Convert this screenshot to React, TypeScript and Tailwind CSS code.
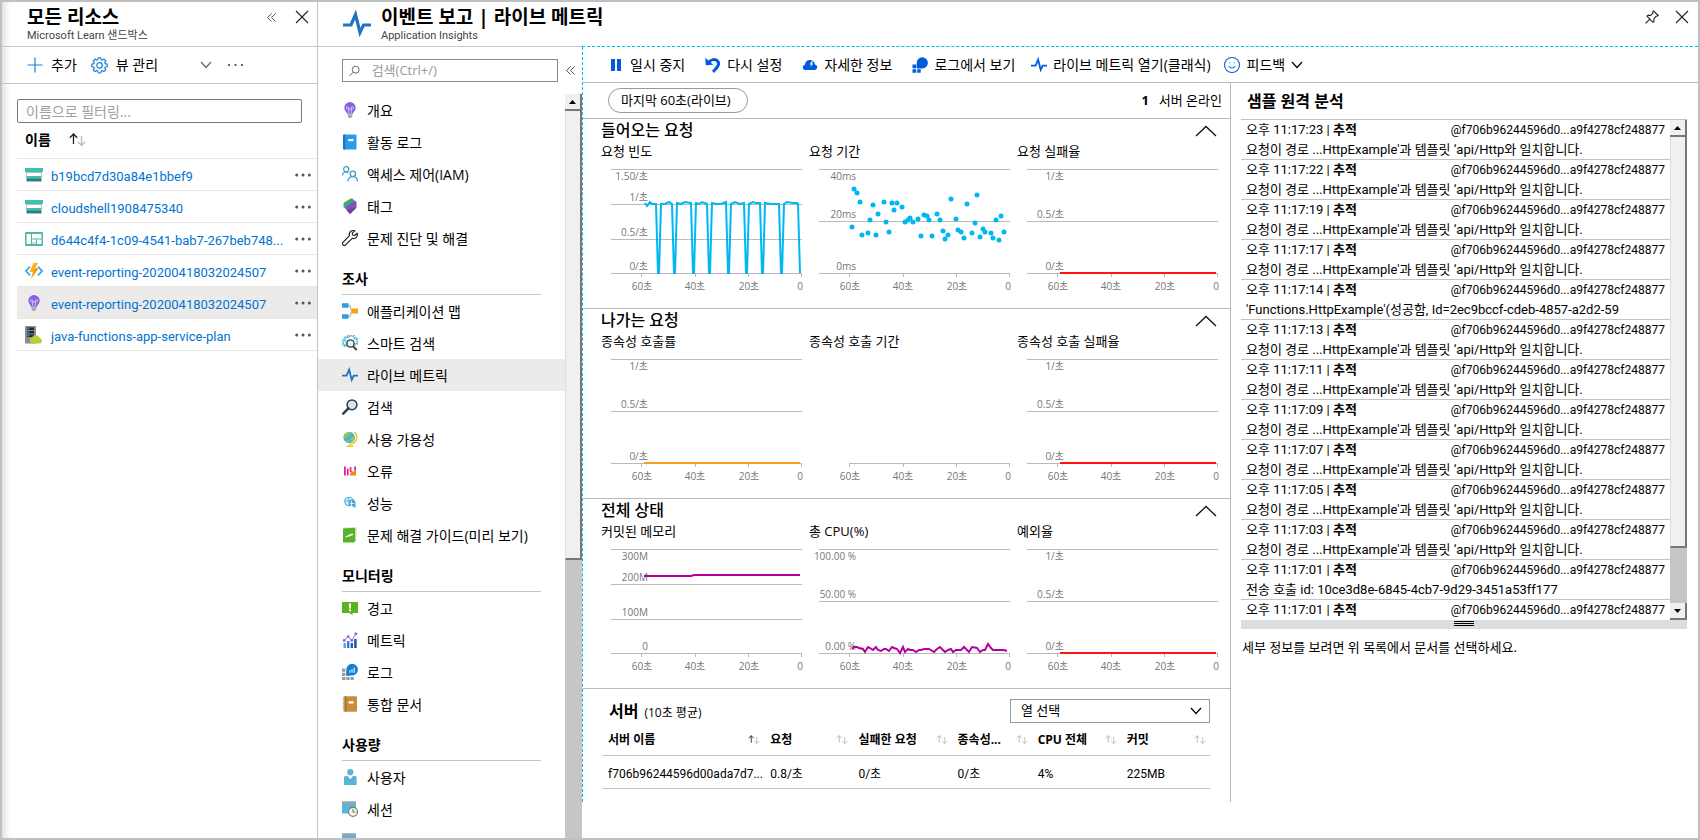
import React from "react";
import { Smile } from "lucide-react";

type IconProps = { className?: string };

// ---------- small line icons ----------

const CloseIcon = () => (
  <svg width="14" height="14" viewBox="0 0 14 14" fill="none" stroke="#222" strokeWidth="1.1">
    <path d="M1 1l12 12M13 1L1 13" />
  </svg>
);

const DoubleLeft = () => (
  <svg width="9" height="9" viewBox="0 0 9 9" fill="none" stroke="#555" strokeWidth="1">
    <path d="M4.500.5l-4 4 4 4M8.500.5l-4 4 4 4" />
  </svg>
);

const ChevronDown = ({ className = "" }: IconProps) => (
  <svg className={className} width="12" height="8" viewBox="0 0 12 8" fill="none" stroke="currentColor" strokeWidth="1.2">
    <path d="M1 1l5 5.500L11 1" />
  </svg>
);

const ChevronUpWide = () => (
  <svg width="22" height="12" viewBox="0 0 22 12" fill="none" stroke="#111" strokeWidth="1.300">
    <path d="M1 11l10-9.500L21 11" />
  </svg>
);

const PinIcon = () => (
  <svg width="14" height="14" viewBox="0 0 14 14" fill="none" stroke="#222" strokeWidth="1.1" strokeLinejoin="round">
    <path d="M8.500.8l4.700 4.700-1.300.8-.7-.1-2.300 2.500.1 2.700-1 .9L1.900 6.200l1-.9 2.700.1L8 3.200 7.800 2z" />
    <path d="M4.900 9.200L.6 13.400" />
  </svg>
);

const SortIcon = ({ active = false, large = false }: { active?: boolean; large?: boolean }) => (
  <svg className="shrink-0" width={large ? 17 : 12} height={large ? 13 : 9} viewBox="0 0 17 13" fill="none" strokeWidth="1.300">
    <path d="M4.500 11V1M.8 4.700L4.500 1l3.700 3.700" stroke={active ? "#222" : "#b5b5b5"} />
    <path d="M12.500 3v9.500M8.800 8.800l3.700 3.700 3.700-3.700" stroke="#bdbdbd" />
  </svg>
);

const Dots = ({ className = "" }: IconProps) => (
  <svg className={className} width="16" height="4" viewBox="0 0 16 4" fill="currentColor">
    <circle cx="1.700" cy="2" r="1.500" />
    <circle cx="8" cy="2" r="1.500" />
    <circle cx="14.300" cy="2" r="1.500" />
  </svg>
);

const Pulse = ({ className = "" }: IconProps) => (
  <svg className={className} viewBox="0 0 28 28" fill="none" stroke="currentColor" strokeWidth="3.200" strokeLinejoin="miter">
    <path d="M0 15h8L12.500 4.500l4.500 18 3.500-7.500h7.500" />
  </svg>
);

// ---------- resource icons ----------

const StorageIcon = () => (
  <svg width="18" height="16" viewBox="0 0 18 16">
    <path d="M1 4h16v10a1 1 0 0 1-1 1H2a1 1 0 0 1-1-1z" fill="#b8b8b8" />
    <path d="M0 1h18v4H0z" fill="#37c2b1" />
    <path d="M2 6h14v3H2z" fill="#fff" />
    <path d="M2 9h14v2.500H2z" fill="#37c2b1" />
    <path d="M2 11.500h14V14H2z" fill="#258277" />
  </svg>
);

const DashboardIcon = () => (
  <svg width="18" height="14" viewBox="0 0 18 14">
    <rect width="18" height="14" rx="1" fill="#4fb5a4" />
    <path d="M1.500 2h4.500v10H1.500zM7 2h9.500v4.500H7zM7 7.500h4V12H7zM12 7.500h4.500V12H12z" fill="#fff" />
    <path d="M7 9.500h4V12H7z" fill="#bfe8e1" />
  </svg>
);

const FunctionIcon = () => (
  <svg width="18" height="16" viewBox="0 0 18 16">
    <path d="M5 3.500L1 8l4 4.500M13 3.500L17 8l-4 4.500" fill="none" stroke="#32a9e8" strokeWidth="1.800" />
    <path d="M8.500 0H13l-3 5.500h3.500L5.800 16l2-7H4.600z" fill="#fbb01c" />
    <path d="M9 5.500h4.500L5.800 16l3.700-7.500z" fill="#f58b1b" />
  </svg>
);

const BulbIcon = () => (
  <svg className="h-4 w-4" viewBox="0 0 16 16">
    <path d="M8 0a5.700 5.700 0 0 0-5.700 5.700c0 2.700 2.200 3.800 2.900 6.100h5.600c.7-2.300 2.900-3.400 2.900-6.100A5.700 5.700 0 0 0 8 0z" fill="#8660e0" />
    <path d="M6.700 11V5.800a1.200 1.200 0 1 0-1.200 1.200h5a1.200 1.200 0 1 0-1.200-1.200V11" fill="none" stroke="#dccbff" strokeWidth=".9" />
    <path d="M5.500 12.300h5v1.600L9.300 16H6.700l-1.200-2.100z" fill="#a9a9a9" />
  </svg>
);

const PlanIcon = () => (
  <svg width="18" height="18" viewBox="0 0 18 18">
    <rect width="11" height="17.500" rx="1" fill="#8c8c8c" />
    <path d="M2 1.500h7V4H2zM2 5h7v2.500H2zM2 8.500h7V11H2z" fill="#1f2a35" />
    <path d="M2.500 2.200h1.800v1H2.500zM2.500 5.700h1.800v1H2.500zM2.500 9.200h1.800v1H2.500z" fill="#5fb8e8" />
    <path d="M7.500 17.500a3.200 3.200 0 0 1-.3-6.300 4.200 4.200 0 0 1 7.700 1.100 2.700 2.700 0 0 1 .3 5.200z" fill="#b2d233" />
  </svg>
);

const GearIcon = () => (
  <svg width="17" height="17" viewBox="0 0 17 17" fill="none" stroke="#1a80d9" strokeWidth="1.200" strokeLinejoin="round">
    <path d="M7.200.8h2.600l.4 2 1 .4 1.700-1.100 1.900 1.900-1.100 1.600.5 1.100 2 .4v2.500l-2 .4-.5 1.100 1.100 1.700-1.900 1.900-1.700-1.200-1 .5-.4 2H7.200l-.4-2-1.100-.5-1.600 1.200-1.900-1.900 1.100-1.700-.4-1.100-2.100-.4V7.100l2.100-.4.4-1.100-1.100-1.600 1.900-1.900 1.600 1.100 1.100-.4z" />
    <circle cx="8.500" cy="8.400" r="2.700" />
  </svg>
);

// ---------- navigation icons ----------

const BookBlue = () => (
  <svg className="h-4 w-4" viewBox="0 0 16 16">
    <rect x="1" y=".5" width="13.500" height="15" rx="1" fill="#2c9be6" />
    <path d="M1 1.500a1 1 0 0 1 1-1h1.200v15H2a1 1 0 0 1-1-1z" fill="#1577c2" />
    <path d="M6.300 5h5.200v2.200H6.300z" fill="#fff" />
  </svg>
);

const AccessIcon = () => (
  <svg className="h-4 w-4" viewBox="0 0 16 16" fill="none" stroke="#36a0c8" strokeWidth="1.200">
    <circle cx="4.200" cy="3.300" r="2.600" />
    <path d="M.4 9.700c.3-2.300 1.700-3.700 3.500-3.700 1 0 1.800.4 2.400 1" />
    <circle cx="10.800" cy="7.800" r="2.700" />
    <path d="M5.800 15.500c.3-2.900 2.200-4.900 5-4.900s4.500 2 4.800 4.900" />
  </svg>
);

const TagIcon = () => (
  <svg className="h-4 w-4" viewBox="0 0 16 16">
    <path d="M1.500 5L8.500.4l3.200.3L3.500 10.500 1.500 9.300z" fill="#5ea42c" />
    <path d="M2.800 6.500L11 1.500l2 1.300-7.500 9.400-2.700-2z" fill="#2f9fc4" />
    <path d="M4.500 8.300L13 2.600l1.500 1.500v5.500L8 16l-3.500-4z" fill="#8552a8" />
    <path d="M14.500 9.600L8 16l-3.500-4z" fill="#6d3f92" />
  </svg>
);

const WrenchIcon = () => (
  <svg className="h-4 w-4" viewBox="0 0 16 16" fill="none" stroke="#222" strokeWidth="1.200" strokeLinejoin="round">
    <path d="M12.800.9a3.900 3.900 0 0 0-5.300 4.800L1 12.300a1.800 1.800 0 0 0 2.600 2.600l6.600-6.600A3.900 3.900 0 0 0 15.100 3.200l-2.500 2.300-2-.5-.4-1.900z" />
  </svg>
);

const AppMapIcon = () => (
  <svg className="h-4 w-4" viewBox="0 0 16 16">
    <path d="M5 2.500h2.200c2.500 0 .5 5.200 3.300 5.500-2.800.3-.8 5.500-3.300 5.500H5" fill="none" stroke="#b8b8b8" strokeWidth="1.300" />
    <path d="M0 .2h6.500v4.600H0zM0 11.200h6.500v4.600H0z" fill="#2f9fdf" />
    <path d="M9.500 5.500H16v5H9.500z" fill="#f9a11b" />
  </svg>
);

const SmartSearchIcon = () => (
  <svg className="h-4 w-4" viewBox="0 0 16 16">
    <path d="M3.200 10.700A3 3 0 0 1 2 5.200 3.500 3.500 0 0 1 6 2a4 4 0 0 1 7 1.300 3.300 3.300 0 0 1 1 6z" fill="none" stroke="#4db4dc" strokeWidth="2.600" strokeDasharray="1.500 .7" />
    <path d="M3 5h9v6H4z" fill="#8ad0ea" />
    <circle cx="8.500" cy="8.500" r="3.600" fill="#e3f4fb" stroke="#3b3b3b" strokeWidth="1.300" />
    <path d="M11.200 11.400l3.500 3.600" stroke="#3b3b3b" strokeWidth="1.900" />
  </svg>
);

const SearchDark = () => (
  <svg className="h-4 w-4" viewBox="0 0 16 16">
    <circle cx="10" cy="5.800" r="4.900" fill="#cfe7f8" stroke="#3d3d3d" strokeWidth="1.500" />
    <path d="M6.400 9.400l-5.200 5.200" stroke="#3d3d3d" strokeWidth="2.500" strokeLinecap="round" />
  </svg>
);

const GlobeIcon = () => (
  <svg className="h-4 w-4" viewBox="0 0 16 16">
    <circle cx="7.200" cy="6.500" r="5.800" fill="#4cb2dd" />
    <path d="M3 3.500c2-2.500 4-2.500 5.500-2l-1 3-2.500 1-1 2-2-.5zM8.500 6.500l3.300-1 1 2-2.300 3.500-2-1.500zM4.500 9l2 .5.500 2.300-2-.5z" fill="#9bc93c" />
    <path d="M12.500.8a7.300 7.300 0 0 1-4 12.500M8 13v2M4.500 15.300h7" fill="none" stroke="#f2c230" strokeWidth="1.400" />
  </svg>
);

const FailuresIcon = () => (
  <svg className="h-4 w-4" viewBox="0 0 16 16">
    <path d="M2 3.500h1.800v9H2zM5 5.500h1.600v7H5zM12.200 3.500H14v4h-1.800zM7.800 4h1.600v5H7.800z" fill="#e3209b" />
    <path d="M7.500 12.500l1.800-5 2 1.500 2.700-2.500v6z" fill="#f58220" />
  </svg>
);

const PerformanceIcon = () => (
  <svg className="h-4 w-4" viewBox="0 0 16 16">
    <circle cx="7" cy="6.500" r="4.300" fill="#d9f0f8" stroke="#4db4dc" strokeWidth="1.100" />
    <path d="M3 6h7M6 2.500L8 9" stroke="#4db4dc" />
    <path d="M6.500 8a3.500 3.500 0 0 1 7 0v5l-2.500-1.500-4.500-1z" fill="#4aa9d0" />
    <path d="M9.500 6v6M8 8.500h4" stroke="#fff" strokeWidth=".8" />
  </svg>
);

const GuideIcon = () => (
  <svg className="h-4 w-4" viewBox="0 0 16 16">
    <path d="M2.500.5h12v14h-12z" fill="#c9e4ad" />
    <path d="M1 1.500l12-.7V14l-1 1.500H1z" fill="#59b02c" />
    <path d="M3.500 9.800h1.700l1.300-1.600 1 .9 1.300-1.900.8 1 1.500-1.400" fill="none" stroke="#fff" strokeWidth="1.100" />
  </svg>
);

const AlertIcon = () => (
  <svg className="h-4 w-4" viewBox="0 0 16 16">
    <path d="M0 2h16v11h-5.500v2.200L7.500 13H0z" fill="#5fb21f" />
    <path d="M7 3.500h2v5H7zM7 9.500h2v1.800H7z" fill="#fff" />
  </svg>
);

const MetricsIcon = () => (
  <svg className="h-4 w-4" viewBox="0 0 16 16">
    <path d="M1.500 11h2.400v5H1.500z" fill="#5ea0ef" />
    <path d="M5 9h2.400v7H5z" fill="#2f7be0" />
    <path d="M8.600 11H11v5H8.600z" fill="#1560bd" />
    <path d="M12.200 7h2.400v9h-2.400z" fill="#15508f" />
    <path d="M2.200 8.500l3.900-3.800 3.700 3.800 4-6.500" fill="none" stroke="#9b62e0" strokeWidth="1" />
    <circle cx="2.200" cy="8.500" r="1.400" fill="#9b62e0" />
    <circle cx="6.100" cy="4.700" r="1.400" fill="#9b62e0" />
    <circle cx="9.800" cy="8.500" r="1.400" fill="#9b62e0" />
    <circle cx="13.800" cy="1.700" r="1.500" fill="#9b62e0" />
  </svg>
);

const LogsIcon = () => (
  <svg className="h-4 w-4" viewBox="0 0 16 16">
    <path d="M0 4.500h3.400v3.200H0zM0 8.700h3.400v3.200H0zM0 12.900h3.400V16H0zM4.300 12.900h3.300V16H4.300zM8.500 12.900h3.300V16H8.500zM4.300 8.700h3.300v3.200H4.300z" fill="#9b9b9b" />
    <path d="M4.300 11.500V5.800a5.800 5.800 0 1 1 5.800 5.700z" fill="#0f7fd6" />
    <path d="M7.200 6.300h1.300v2.500H7.200zM9.400 5h1.300v3.800H9.400zM11.600 3.500h1.300v5.300h-1.300z" fill="#bfe3fa" />
  </svg>
);

const NotebookIcon = () => (
  <svg className="h-4 w-4" viewBox="0 0 16 16">
    <rect x="1.500" y=".3" width="13.500" height="15.500" rx=".8" fill="#c98d3f" />
    <path d="M3.300.3h1v15.500h-1z" fill="#a36b27" />
    <path d="M.5 2.500h2M.5 5h2M.5 7.500h2M.5 10h2M.5 12.500h2" stroke="#b9b9b9" />
    <path d="M6.500 5.300h5v2.200h-5z" fill="#fff" />
  </svg>
);

const UserIcon = () => (
  <svg className="h-4 w-4" viewBox="0 0 16 16">
    <circle cx="8.300" cy="3.200" r="3.100" fill="#59b4d9" />
    <path d="M2 16V8.500C2 7.600 2.700 7 3.500 7h2l2.800 3.300L11 7h2c.9 0 1.600.6 1.600 1.500V16z" fill="#59b4d9" />
  </svg>
);

const SessionIcon = () => (
  <svg className="h-4 w-4" viewBox="0 0 16 16">
    <path d="M0 .5h14v12H0z" fill="#59b4d9" />
    <path d="M0 .5h14v2.300H0z" fill="#a0a1a2" />
    <circle cx="11" cy="10.800" r="4.500" fill="#f5f5f5" stroke="#7a7a7a" strokeWidth="1.200" />
    <path d="M11 8v3h2.500" fill="none" stroke="#5c8f10" strokeWidth="1.100" />
  </svg>
);

// ---------- toolbar icons ----------

const PauseIcon = () => (
  <svg className="h-4 w-4" viewBox="0 0 16 16" fill="#015cda">
    <path d="M3 2h4v12H3zM9 2h4v12H9z" />
  </svg>
);

const ResetIcon = () => (
  <svg className="h-4 w-4" viewBox="0 0 16 16">
    <path d="M3.500 5.500c2.500-3.200 6.500-3.900 8.900-1.600 2.700 2.700.8 5.600-4.400 11" fill="none" stroke="#015cda" strokeWidth="3" />
    <path d="M.3.700l.5 7.500 7.500-.4z" fill="#015cda" />
  </svg>
);

const CloudIcon = () => (
  <svg className="h-4 w-4" viewBox="0 0 16 16">
    <path d="M2.800 13a2.700 2.700 0 0 1 .2-5.300A4.800 4.800 0 0 1 8 3a4.800 4.800 0 0 1 5 4.400A2.900 2.900 0 0 1 13.200 13z" fill="#015cda" />
    <path d="M9.800 4L7.800 7.500h1.600L8.300 10.300l3-3.700H9.800l1.200-2.300z" fill="#fff" />
  </svg>
);

const LogSolidIcon = () => (
  <svg className="h-4 w-4" viewBox="0 0 16 16" fill="#015cda">
    <path d="M4.700 10.800V6a5.600 5.600 0 1 1 5.600 5.500H5.500z" />
    <path d="M.5 7.500h3.700v3.700H.5zM.5 12.200h3.700v3.500H.5zM5.200 12.200h3.500v3.500H5.200z" />
  </svg>
);

// ---------- data ----------

const resources = [
  { name: "b19bcd7d30a84e1bbef9", icon: <StorageIcon /> },
  { name: "cloudshell1908475340", icon: <StorageIcon /> },
  { name: "d644c4f4-1c09-4541-bab7-267beb748...", icon: <DashboardIcon /> },
  { name: "event-reporting-20200418032024507", icon: <FunctionIcon /> },
  { name: "event-reporting-20200418032024507", icon: <BulbIcon />, selected: true },
  { name: "java-functions-app-service-plan", icon: <PlanIcon /> }
];

const navSections = [
  {
    title: "",
    items: [
      { label: "개요", icon: <BulbIcon /> },
      { label: "활동 로그", icon: <BookBlue /> },
      { label: "액세스 제어(IAM)", icon: <AccessIcon /> },
      { label: "태그", icon: <TagIcon /> },
      { label: "문제 진단 및 해결", icon: <WrenchIcon /> }
    ]
  },
  {
    title: "조사",
    items: [
      { label: "애플리케이션 맵", icon: <AppMapIcon /> },
      { label: "스마트 검색", icon: <SmartSearchIcon /> },
      { label: "라이브 메트릭", icon: <Pulse className="h-4 w-4 text-[#1f74c4]" />, selected: true },
      { label: "검색", icon: <SearchDark /> },
      { label: "사용 가용성", icon: <GlobeIcon /> },
      { label: "오류", icon: <FailuresIcon /> },
      { label: "성능", icon: <PerformanceIcon /> },
      { label: "문제 해결 가이드(미리 보기)", icon: <GuideIcon /> }
    ]
  },
  {
    title: "모니터링",
    items: [
      { label: "경고", icon: <AlertIcon /> },
      { label: "메트릭", icon: <MetricsIcon /> },
      { label: "로그", icon: <LogsIcon /> },
      { label: "통합 문서", icon: <NotebookIcon /> }
    ]
  },
  {
    title: "사용량",
    items: [
      { label: "사용자", icon: <UserIcon /> },
      { label: "세션", icon: <SessionIcon /> },
      { label: "", icon: <SessionIcon /> }
    ]
  }
];

const tools = [
  { label: "일시 중지", icon: <PauseIcon />, gap: "" },
  { label: "다시 설정", icon: <ResetIcon />, gap: "ml-5" },
  { label: "자세한 정보", icon: <CloudIcon />, gap: "ml-5" },
  { label: "로그에서 보기", icon: <LogSolidIcon />, gap: "ml-5" },
  { label: "라이브 메트릭 열기(클래식)", icon: <Pulse className="h-4 w-4 text-[#015cda]" />, gap: "ml-4" },
  { label: "피드백", icon: <Smile size={18} strokeWidth={1.4} color="#015cda" />, gap: "ml-3", menu: true }
];

type Tick = { y: number; label: string };

interface ChartSpec {
  title: string;
  ticks: Tick[];
  color?: string;
  line?: string;
  dots?: number[][];
}

const rateTicks: Tick[] = [
  { y: 8, label: "1/초" },
  { y: 60, label: "0.5/초" },
  { y: 112, label: "0/초" }
];

const requestDots = [
  [43, 66], [45, 28], [48, 32], [51, 41], [53, 74], [59, 72], [61, 59], [64, 44], [67, 74], [69, 53],
  [75, 41], [77, 61], [80, 71], [83, 42], [85, 49], [88, 42], [93, 46], [96, 61], [99, 59], [101, 57],
  [104, 61], [109, 58], [112, 75], [115, 54], [118, 55], [120, 59], [123, 75], [128, 53], [131, 59], [134, 70],
  [136, 78], [139, 74], [142, 38], [147, 58], [149, 69], [152, 71], [155, 77], [158, 43], [163, 72], [166, 62],
  [168, 34], [171, 76], [174, 68], [176, 71], [182, 72], [184, 77], [187, 59], [190, 79], [192, 55], [195, 71]
];

const requestLine =
  "44,42 46,45 49,41 51,43 55,43 57,112 58,112 60,43 64,43 68,41 71,43 73,112 74,112 76,42 80,43 84,41 90,42 92,112 93,112 95,42 98,43 101,41 106,43 108,112 109,112 111,42 115,43 120,43 125,41 127,112 128,112 130,43 134,41 139,43 143,42 145,112 146,112 148,43 152,41 155,42 159,42 161,112 162,112 164,42 170,43 178,43 180,112 181,112 183,43 186,41 192,42 196,42 197,43 199,112";

const cpuLine =
  "43,108 45,106 48,106 50,107 54,108 56,111 59,106 61,107 64,109 67,106 69,109 72,110 75,108 77,108 80,110 83,106 85,107 88,108 91,112 94,106 96,111 99,108 101,109 104,109 107,111 110,109 112,109 115,108 120,108 125,111 128,108 131,106 134,109 136,111 139,109 142,108 144,111 147,109 152,109 155,106 158,109 160,111 163,106 168,107 171,111 174,109 176,109 179,103 182,107 184,109 195,109 198,110";

const chartSections: { title: string; charts: ChartSpec[] }[] = [
  {
    title: "들어오는 요청",
    charts: [
      {
        title: "요청 빈도",
        ticks: [
          { y: 8, label: "1.50/초" },
          { y: 43, label: "1/초" },
          { y: 78, label: "0.5/초" },
          { y: 112, label: "0/초" }
        ],
        color: "#00b7f1",
        line: requestLine
      },
      {
        title: "요청 기간",
        ticks: [
          { y: 8, label: "40ms" },
          { y: 60, label: "20ms" },
          { y: 112, label: "0ms" }
        ],
        color: "#00b7f1",
        dots: requestDots
      },
      { title: "요청 실패율", ticks: rateTicks, color: "#ff1414", line: "43,112 199,112" }
    ]
  },
  {
    title: "나가는 요청",
    charts: [
      { title: "종속성 호출률", ticks: rateTicks, color: "#ff9b1f", line: "43,112 199,112" },
      { title: "종속성 호출 기간", ticks: [] },
      { title: "종속성 호출 실패율", ticks: rateTicks, color: "#ff1414", line: "43,112 199,112" }
    ]
  },
  {
    title: "전체 상태",
    charts: [
      {
        title: "커밋된 메모리",
        ticks: [
          { y: 8, label: "300M" },
          { y: 43, label: "200M" },
          { y: 78, label: "100M" },
          { y: 112, label: "0" }
        ],
        color: "#b4009e",
        line: "43,35 90,35 93,34 199,34"
      },
      {
        title: "총 CPU(%)",
        ticks: [
          { y: 8, label: "100.00 %" },
          { y: 60, label: "50.00 %" },
          { y: 112, label: "0.00 %" }
        ],
        color: "#b4009e",
        line: cpuLine
      },
      { title: "예외율", ticks: rateTicks, color: "#ff1414", line: "43,112 199,112" }
    ]
  }
];

const route = "요청이 경로 ...HttpExample'과 템플릿 ‘api/Http와 일치합니다.";

const traces = [
  { time: "11:17:23", text: route },
  { time: "11:17:22", text: route },
  { time: "11:17:19", text: route },
  { time: "11:17:17", text: route },
  { time: "11:17:14", text: "'Functions.HttpExample'(성공함, Id=2ec9bccf-cdeb-4857-a2d2-59" },
  { time: "11:17:13", text: route },
  { time: "11:17:11", text: route },
  { time: "11:17:09", text: route },
  { time: "11:17:07", text: route },
  { time: "11:17:05", text: route },
  { time: "11:17:03", text: route },
  { time: "11:17:01", text: "전송 호출 id: 10ce3d8e-6845-4cb7-9d29-3451a53ff177" },
  { time: "11:17:01", text: "" }
];

const columns = [
  { label: "서버 이름", value: "f706b96244596d00ada7d7...", width: "w-[162px]" },
  { label: "요청", value: "0.8/초", width: "w-[88px]" },
  { label: "실패한 요청", value: "0/초", width: "w-[99px]" },
  { label: "종속성...", value: "0/초", width: "w-[80px]" },
  { label: "CPU 전체", value: "4%", width: "w-[89px]" },
  { label: "커밋", value: "225MB", width: "w-[89px]" }
];

// ---------- shared pieces ----------

function ScrollButton({ down = false }: { down?: boolean }) {
  return (
    <button
      aria-label={down ? "아래로 스크롤" : "위로 스크롤"}
      className="flex h-[17px] w-[17px] shrink-0 items-center justify-center border-r-2 border-b-2 border-[#777] bg-[#f0f0f0]"
    >
      <svg width="7" height="4" viewBox="0 0 7 4">
        <path d={down ? "M0 0h7L3.500 4z" : "M0 4h7L3.500 0z"} />
      </svg>
    </button>
  );
}

function Chart({ title, ticks, color, line, dots }: ChartSpec) {
  const start = ticks.length ? 10 : 40;
  return (
    <div>
      <h3 className="h-[18px] text-[13px] leading-4 whitespace-nowrap">{title}</h3>
      <svg className="block w-full" viewBox="0 0 208 147">
        <g stroke="#b9b9b9" shapeRendering="crispEdges">
          {ticks.map((t) => (
            <path key={t.label} d={`M10 ${t.y + 0.5}H201`} />
          ))}
          <path d={`M${start} 112.5H201`} />
          <path d="M40.500 112v4M94.500 112v4M147.500 112v4M200.500 112v4" />
        </g>
        <g fill="#767676" fontSize="10">
          {ticks.map((t, i) => (
            <text key={t.label} x="47" y={i === 0 ? t.y + 11 : t.y - 3} textAnchor="end">
              {t.label}
            </text>
          ))}
          <g textAnchor="middle">
            <text x="41" y="129">60초</text>
            <text x="94" y="129">40초</text>
            <text x="148" y="129">20초</text>
            <text x="199" y="129">0</text>
          </g>
        </g>
        {line && <polyline points={line} fill="none" stroke={color} strokeWidth="2" />}
        {dots && dots.map(([x, y]) => <circle key={x} cx={x} cy={y} r="2.500" fill={color} />)}
      </svg>
    </div>
  );
}

function ResourcePanel() {
  return (
    <aside className="flex w-[316px] shrink-0 flex-col border-r border-[#c4c4c4] shadow-[inset_8px_0_8px_-6px_rgba(0,0,0,0.16)]">
      <header className="flex h-[45px] shrink-0 justify-between border-b border-[#c8c8c8] pr-2 pl-[25px]">
        <div>
          <h1 className="text-[19px] leading-[30px] font-bold">모든 리소스</h1>
          <p className="font-['Roboto','Noto_Sans_CJK_KR',sans-serif] text-[11px] leading-2 text-[#444]">Microsoft Learn 샌드박스</p>
        </div>
        <div className="flex h-[30px] items-center gap-[19px]">
          <button aria-label="축소"><DoubleLeft /></button>
          <button aria-label="닫기"><CloseIcon /></button>
        </div>
      </header>

      <div className="flex h-[37px] shrink-0 items-center border-b border-[#c8c8c8] pl-[25px] text-sm">
        <button className="flex items-center gap-2">
          <svg width="16" height="16" viewBox="0 0 16 16" stroke="#1a80d9" strokeWidth="1.200">
            <path d="M8 .5v15M.5 8h15" />
          </svg>
          추가
        </button>
        <button className="ml-3.5 flex items-center gap-2">
          <GearIcon />
          뷰 관리
        </button>
        <button aria-label="펼치기" className="ml-[42px] text-[#666]"><ChevronDown /></button>
        <button aria-label="더 보기" className="ml-4 text-[#666]">
          <svg width="15" height="2" viewBox="0 0 15 2" fill="currentColor">
            <path d="M0 0h2v2H0zM6.500 0h2v2h-2zM13 0h2v2h-2z" />
          </svg>
        </button>
      </div>

      <div className="pl-[15px]">
        <input
          type="text"
          aria-label="이름으로 필터링"
          placeholder="이름으로 필터링..."
          className="mt-[15px] block h-6 w-[285px] rounded-[2px] border border-[#767676] bg-white px-2 text-sm placeholder:text-[#a0a0a0]"
        />
        <div className="flex h-[35px] items-center gap-[18px] pb-0.5 pl-2 text-sm font-bold">
          <span>이름</span>
          <SortIcon active large />
        </div>
        <ul className="border-t border-[#e8e8e8] font-['Roboto','Noto_Sans_CJK_KR',sans-serif] text-[13px]">
          {resources.map((r, i) => (
            <li
              key={i}
              className={`flex h-8 items-center border-b border-[#e8e8e8] pr-1.5 pl-2 ${r.selected ? "bg-[#ecebea]" : ""}`}
            >
              <span className="flex w-[18px] shrink-0 justify-center">{r.icon}</span>
              <a href="#" className="ml-2 pt-1 whitespace-nowrap text-[#0074d0]">{r.name}</a>
              <button aria-label="더 보기" className="ml-auto text-[#555]"><Dots /></button>
            </li>
          ))}
        </ul>
      </div>
    </aside>
  );
}

function SideNav() {
  return (
    <div className="flex w-[264px] shrink-0 flex-col">
      <div className="flex h-[47px] shrink-0 items-center pl-6">
        <label className="flex h-[23px] w-[216px] items-center border border-[#8a8a8a] px-1.5">
          <svg width="12" height="12" viewBox="0 0 12 12" fill="none" stroke="#666" strokeWidth="1.100">
            <circle cx="7.500" cy="4.500" r="3.900" />
            <path d="M4.700 7.300L.4 11.600" />
          </svg>
          <input
            type="text"
            aria-label="검색"
            placeholder="검색(Ctrl+/)"
            className="ml-3 w-full text-[13px] outline-none placeholder:text-[#999]"
          />
        </label>
        <button aria-label="축소" className="ml-2"><DoubleLeft /></button>
      </div>

      <div className="flex min-h-0 flex-1">
        <nav className="min-w-0 flex-1 overflow-hidden text-sm">
          {navSections.map((s, i) => (
            <div key={i}>
              {s.title && (
                <h2 className="mr-6 ml-6 flex h-[41px] items-center border-b border-[#c4c4c4] pt-2.5 font-bold">{s.title}</h2>
              )}
              {s.items.map((item) => (
                <a
                  key={item.label}
                  href="#"
                  className={`flex h-8 items-center gap-[9px] pl-6 whitespace-nowrap ${item.selected ? "bg-[#ecebea]" : ""}`}
                >
                  {item.icon}
                  {item.label && <span className="pt-0.5">{item.label}</span>}
                </a>
              ))}
            </div>
          ))}
        </nav>
        <div className="flex w-[17px] shrink-0 flex-col bg-[#c6c6c6]">
          <ScrollButton />
          <div className="h-[449px] border-r-2 border-b-2 border-l border-[#777] border-l-[#ddd] bg-[#f0f0f0]" />
        </div>
      </div>
    </div>
  );
}

function ServersTable() {
  return (
    <div className="pr-5 pl-[19px]">
      <div className="flex items-center justify-between pt-2.5 pl-[7px]">
        <h2 className="flex items-baseline gap-1.5 text-base font-bold">
          서버 <span className="text-[12px] font-normal">(10초 평균)</span>
        </h2>
        <div className="relative w-[200px]">
          <select aria-label="열 선택" className="block h-6 w-full appearance-none border border-[#999] bg-white px-2.5 text-[13px]">
            <option>열 선택</option>
          </select>
          <ChevronDown className="pointer-events-none absolute top-2 right-2" />
        </div>
      </div>
      <table className="w-full table-fixed text-left text-[12px]">
        <thead>
          <tr className="h-8 border-b border-[#c4c4c4]">
            {columns.map((c, i) => (
              <th key={c.label} className={`${c.width} p-0 pt-0.5 pl-1.5 font-bold`}>
                <span className="flex items-center justify-between pr-1 whitespace-nowrap">
                  {c.label}
                  <SortIcon active={i === 0} />
                </span>
              </th>
            ))}
          </tr>
        </thead>
        <tbody>
          <tr className="h-[33px] border-b border-[#c4c4c4] font-['Roboto','Noto_Sans_CJK_KR',sans-serif]">
            {columns.map((c) => (
              <td key={c.label} className="p-0 pt-1 pl-1.5 whitespace-nowrap">{c.value}</td>
            ))}
          </tr>
        </tbody>
      </table>
    </div>
  );
}

function Telemetry() {
  return (
    <div className="min-w-0 pr-[11px] pl-2.5">
      <h2 className="flex h-9 items-center pl-1.5 text-base font-bold">샘플 원격 분석</h2>
      <div className="flex h-[501px] border-t border-[#c4c4c4]">
        <ul className="min-w-0 flex-1 overflow-hidden font-['Roboto','Noto_Sans_CJK_KR',sans-serif] text-[13px]">
          {traces.map((t, i) => (
            <li key={i} className="h-10 border-b border-[#c4c4c4] pr-[5px] pl-[5px] whitespace-nowrap">
              <div className="flex h-5 items-center justify-between">
                <span>오후 {t.time} | <strong>추적</strong></span>
                <span className="text-[12px]">@f706b96244596d0...a9f4278cf248877</span>
              </div>
              <p className="h-5 overflow-hidden leading-5">{t.text}</p>
            </li>
          ))}
        </ul>
        <div className="flex w-[17px] shrink-0 flex-col bg-[#c6c6c6]">
          <ScrollButton />
          <div className="h-[411px] border-r-2 border-b-2 border-l border-[#777] border-l-[#ddd] bg-[#f0f0f0]" />
          <div className="mt-auto"><ScrollButton down /></div>
        </div>
      </div>
      <div className="flex h-[9px] flex-col items-center gap-px bg-[#dadee1] pt-px">
        <span className="h-px w-5 bg-black" />
        <span className="h-px w-5 bg-black" />
        <span className="h-px w-5 bg-black" />
      </div>
      <p className="pt-2 pl-px text-[13px] leading-5">세부 정보를 보려면 위 목록에서 문서를 선택하세요.</p>
    </div>
  );
}

function LiveMetrics() {
  return (
    <main className="mb-9 flex min-w-0 flex-1 flex-col border-l border-dashed border-[#00b7f1]">
      <div className="flex h-9 shrink-0 items-center border-b border-[#b9b9b9] pl-[25px] text-sm whitespace-nowrap">
        {tools.map((t) => (
          <button key={t.label} className={`flex items-center gap-1.5 ${t.gap}`}>
            {t.icon}
            {t.label}
            {t.menu && <ChevronDown />}
          </button>
        ))}
      </div>

      <div className="grid min-h-0 flex-1 grid-cols-[648fr_467fr]">
        <div className="min-w-0 border-r border-[#b9b9b9]">
          <div className="flex h-9 items-center justify-between border-b border-[#b9b9b9] pr-2 pl-[25px] text-[13px]">
            <button className="h-[25px] rounded-full border border-[#999] pr-4 pl-3">마지막 60초(라이브)</button>
            <span className="flex gap-2.5"><strong>1</strong> 서버 온라인</span>
          </div>
          {chartSections.map((s) => (
            <section key={s.title} className="border-b border-[#b9b9b9] pr-[5px] pl-[18px]">
              <div className="flex h-6 items-center justify-between pr-2">
                <h2 className="pb-0.5 text-base font-medium">{s.title}</h2>
                <button aria-label={`${s.title} 접기`}><ChevronUpWide /></button>
              </div>
              <div className="grid grid-cols-3">
                {s.charts.map((c) => (
                  <Chart key={c.title} {...c} />
                ))}
              </div>
            </section>
          ))}
          <ServersTable />
        </div>
        <Telemetry />
      </div>
    </main>
  );
}

export default function App() {
  return (
    <div className="flex h-screen overflow-hidden border-2 border-[#c0c0c0] bg-white font-['Open_Sans','Noto_Sans_CJK_KR',sans-serif] text-black">
      <ResourcePanel />
      <div className="flex min-w-0 flex-1 flex-col">
        <header className="flex h-11 shrink-0 justify-between pr-[9px] pl-6">
          <div className="flex">
            <Pulse className="mt-2 mr-2.5 ml-px h-7 w-7 text-[#1f74c4]" />
            <div>
              <h1 className="text-[19px] leading-[30px] font-bold">이벤트 보고 | 라이브 메트릭</h1>
              <p className="font-['Roboto','Noto_Sans_CJK_KR',sans-serif] text-[11px] leading-2 text-[#444]">Application Insights</p>
            </div>
          </div>
          <div className="flex h-[30px] items-center gap-4">
            <button aria-label="고정"><PinIcon /></button>
            <button aria-label="닫기"><CloseIcon /></button>
          </div>
        </header>
        <div className="flex h-px shrink-0">
          <div className="w-[264px] bg-[#c8c8c8]" />
          <div className="flex-1 border-t border-dashed border-[#00b7f1]" />
        </div>
        <div className="flex min-h-0 flex-1">
          <SideNav />
          <LiveMetrics />
        </div>
      </div>
    </div>
  );
}
